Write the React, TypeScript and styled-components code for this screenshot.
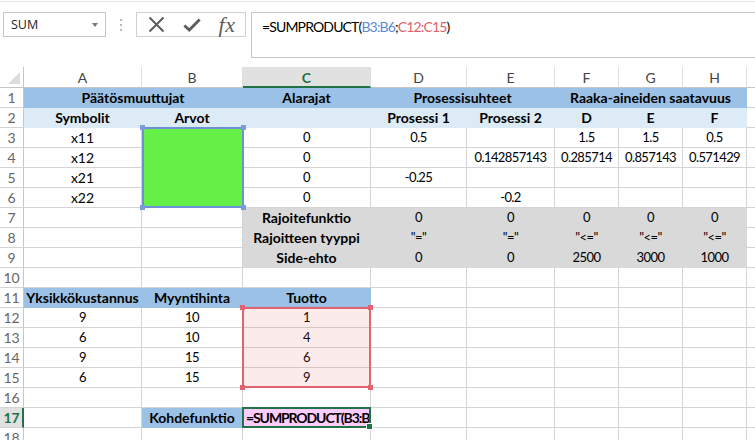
import React from 'react';
import styled, { createGlobalStyle } from 'styled-components';

const GRID = '#d4d4d4';
const BLUE = '#9bc2e6';
const LIGHTBLUE = '#ddebf7';
const GREEN = '#64f046';
const GRAY = '#d9d9d9';
const MAGENTA = '#ffccff';
const XL_GREEN = '#217346';

const COLS = [24, 118, 101, 128, 96, 88, 64, 64, 64, 64];
const HEAD_H = 21;
const ROW_H = 20;
const colLeft = (i: number) => COLS.slice(0, i).reduce((a, b) => a + b, 0);
const rowTop = (r: number) => HEAD_H + (r - 1) * ROW_H;

const Global = createGlobalStyle`
  html, body { margin: 0; padding: 0; background: #fff; }
  body { font-family: Lato, "Liberation Sans", sans-serif; }
`;

const Page = styled.div`
  width: 755px;
  height: 440px;
  overflow: hidden;
  background: #fff;
  display: flex;
  flex-direction: column;
`;

const TopStrip = styled.div`
  height: 1px;
  border-bottom: 1px solid #e3e3e3;
  flex: none;
`;

const FormulaRow = styled.div`
  display: flex;
  align-items: flex-start;
  padding: 10px 0 0 3px;
  height: 45px;
  flex: none;
`;

const NameBox = styled.div`
  box-sizing: border-box;
  width: 103px;
  height: 25px;
  border: 1px solid #c6c6c6;
  display: flex;
  align-items: center;
  justify-content: space-between;
  padding: 0 7px 0 7px;
  font-family: "Open Sans", "Noto Sans", sans-serif;
  font-size: 12.5px;
  color: #222;
`;

const DropArrow = styled.span`
  width: 0;
  height: 0;
  border-left: 3.5px solid transparent;
  border-right: 3.5px solid transparent;
  border-top: 4px solid #777;
`;

const Dots = styled.div`
  width: 30px;
  height: 25px;
  display: flex;
  flex-direction: column;
  align-items: center;
  justify-content: center;
  gap: 3px;
  & > span {
    width: 2px;
    height: 2px;
    background: #b9b9b9;
  }
`;

const ButtonBox = styled.div`
  box-sizing: border-box;
  width: 110px;
  height: 25px;
  border: 1px solid #d0d0d0;
  display: flex;
  align-items: center;
  padding-left: 10px;
`;

const IconSlot = styled.div<{ $w: number; $gap?: number }>`
  width: ${p => p.$w}px;
  margin-left: ${p => p.$gap ?? 0}px;
  display: flex;
  align-items: center;
  justify-content: center;
  color: #5c5c5c;
`;

const Fx = styled.span`
  font-family: "Liberation Serif", "DejaVu Serif", serif;
  font-style: italic;
  font-size: 22px;
  color: #5c5c5c;
  line-height: 1;
  letter-spacing: 0.5px;
`;

const FormulaBar = styled.div`
  box-sizing: border-box;
  margin-left: 5px;
  flex: 1;
  height: 46px;
  border: 1px solid #c6c6c6;
  border-right: none;
  padding: 4px 0 0 10px;
  font-size: 14px;
  letter-spacing: -0.85px;
  color: #000;
  line-height: 20px;
`;

const Ref = styled.span<{ $c: string }>`
  color: ${p => p.$c};
`;

const Sheet = styled.div`
  position: relative;
  margin-top: 10px;
  display: grid;
  grid-template-columns: ${COLS.map(c => c + 'px').join(' ')};
  grid-template-rows: ${HEAD_H}px repeat(19, ${ROW_H}px);
  width: ${colLeft(COLS.length)}px;
`;

const Corner = styled.div`
  position: relative;
  box-sizing: border-box;
  border-right: 1px solid #c6c6c6;
  border-bottom: 1px solid #c6c6c6;
  &::after {
    content: '';
    position: absolute;
    right: 3px;
    bottom: 3px;
    border-left: 12px solid transparent;
    border-bottom: 12px solid #dcdcdc;
  }
`;

const ColHead = styled.div<{ $active?: boolean }>`
  box-sizing: border-box;
  background: ${p => (p.$active ? '#e1e1e1' : '#fff')};
  color: ${p => (p.$active ? XL_GREEN : '#444')};
  font-weight: ${p => (p.$active ? 700 : 400)};
  border-right: 1px solid #dedede;
  border-bottom: ${p => (p.$active ? `2px solid ${XL_GREEN}` : '1px solid #c6c6c6')};
  display: flex;
  align-items: center;
  justify-content: center;
  font-size: 14px;
  padding-top: 1px;
`;

const RowHead = styled.div<{ $active?: boolean }>`
  box-sizing: border-box;
  background: ${p => (p.$active ? '#e1e1e1' : '#fff')};
  color: ${p => (p.$active ? XL_GREEN : '#666')};
  font-weight: ${p => (p.$active ? 700 : 400)};
  border-right: ${p => (p.$active ? `2px solid ${XL_GREEN}` : '1px solid #c6c6c6')};
  border-bottom: 1px solid ${GRID};
  font-size: 14px;
  line-height: 19px;
  text-align: center;
  padding-left: ${p => (p.$active ? 1 : 0)}px;
`;

const Cell = styled.div<{ $fill?: string; $bold?: boolean; $span?: number; $num?: boolean; $left?: boolean }>`
  box-sizing: border-box;
  grid-column: span ${p => p.$span ?? 1};
  background: ${p => p.$fill ?? '#fff'};
  border-right: 1px solid ${p => p.$fill ?? GRID};
  border-bottom: 1px solid ${p => p.$fill ?? GRID};
  font-size: ${p => (p.$num ? 13 : 14)}px;
  letter-spacing: ${p => (p.$num ? '-0.6px' : p.$left ? '-1.1px' : '0')};
  font-weight: ${p => (p.$bold ? 700 : 400)};
  line-height: 19px;
  text-align: ${p => (p.$left ? 'left' : 'center')};
  padding: ${p => (p.$left ? '0 0 0 3px' : '0 1px')};
  white-space: nowrap;
  overflow: hidden;
  color: #000;
`;

const RangeBox = styled.div<{ $c: string; $tint?: string }>`
  position: absolute;
  box-sizing: border-box;
  border: 2px solid ${p => p.$c};
  background: ${p => p.$tint ?? 'transparent'};
  pointer-events: none;
`;

const Handle = styled.span<{ $c: string; $x: 'l' | 'r'; $y: 't' | 'b' }>`
  position: absolute;
  width: 5px;
  height: 5px;
  background: ${p => p.$c};
  ${p => (p.$x === 'l' ? 'left: -4px;' : 'right: -4px;')}
  ${p => (p.$y === 't' ? 'top: -4px;' : 'bottom: -4px;')}
`;

const FillHandle = styled.span`
  position: absolute;
  width: 5px;
  height: 5px;
  right: -4px;
  bottom: -4px;
  background: ${XL_GREEN};
  border: 1px solid #fff;
`;

type C = { t?: string; b?: boolean; f?: string; s?: number; n?: boolean; l?: boolean };

const E: C = {};
const num = (t: string, f?: string): C => ({ t, n: true, f });
const emptyRow = (): C[] => Array.from({ length: 9 }, () => E);

const ROWS: C[][] = [
  [
    { t: 'Päätösmuuttujat', b: true, f: BLUE, s: 2 },
    { t: 'Alarajat', b: true, f: BLUE },
    { t: 'Prosessisuhteet', b: true, f: BLUE, s: 2 },
    { t: 'Raaka-aineiden saatavuus', b: true, f: BLUE, s: 3 },
    E,
  ],
  [
    { t: 'Symbolit', b: true, f: LIGHTBLUE },
    { t: 'Arvot', b: true, f: LIGHTBLUE },
    { f: LIGHTBLUE },
    { t: 'Prosessi 1', b: true, f: LIGHTBLUE },
    { t: 'Prosessi 2', b: true, f: LIGHTBLUE },
    { t: 'D', b: true, f: LIGHTBLUE },
    { t: 'E', b: true, f: LIGHTBLUE },
    { t: 'F', b: true, f: LIGHTBLUE },
    E,
  ],
  [{ t: 'x11' }, { f: GREEN }, num('0'), num('0.5'), E, num('1.5'), num('1.5'), num('0.5'), E],
  [{ t: 'x12' }, { f: GREEN }, num('0'), E, num('0.142857143'), num('0.285714'), num('0.857143'), num('0.571429'), E],
  [{ t: 'x21' }, { f: GREEN }, num('0'), num('-0.25'), E, E, E, E, E],
  [{ t: 'x22' }, { f: GREEN }, num('0'), E, num('-0.2'), E, E, E, E],
  [E, E, { t: 'Rajoitefunktio', b: true, f: GRAY }, num('0', GRAY), num('0', GRAY), num('0', GRAY), num('0', GRAY), num('0', GRAY), E],
  [E, E, { t: 'Rajoitteen tyyppi', b: true, f: GRAY }, num('"="', GRAY), num('"="', GRAY), num('"<="', GRAY), num('"<="', GRAY), num('"<="', GRAY), E],
  [E, E, { t: 'Side-ehto', b: true, f: GRAY }, num('0', GRAY), num('0', GRAY), num('2500', GRAY), num('3000', GRAY), num('1000', GRAY), E],
  emptyRow(),
  [
    { t: 'Yksikkökustannus', b: true, f: BLUE },
    { t: 'Myyntihinta', b: true, f: BLUE },
    { t: 'Tuotto', b: true, f: BLUE },
    E, E, E, E, E, E,
  ],
  [num('9'), num('10'), num('1'), E, E, E, E, E, E],
  [num('6'), num('10'), num('4'), E, E, E, E, E, E],
  [num('9'), num('15'), num('6'), E, E, E, E, E, E],
  [num('6'), num('15'), num('9'), E, E, E, E, E, E],
  emptyRow(),
  [E, { t: 'Kohdefunktio', b: true, f: BLUE }, { t: '=SUMPRODUCT(B3:B6;C12:C15)', b: true, f: MAGENTA, l: true }, E, E, E, E, E, E],
  emptyRow(),
  emptyRow(),
];

const LETTERS = ['A', 'B', 'C', 'D', 'E', 'F', 'G', 'H', 'I'];

const CrossIcon = () => (
  <svg width="17" height="17" viewBox="0 0 17 17">
    <path d="M1.5 1.5 L15.5 15.5 M15.5 1.5 L1.5 15.5" stroke="#5c5c5c" strokeWidth="2" fill="none" />
  </svg>
);

const CheckIcon = () => (
  <svg width="20" height="16" viewBox="0 0 20 16">
    <path d="M1.5 8.5 L7 13.5 L18.5 2" stroke="#5c5c5c" strokeWidth="3.2" fill="none" />
  </svg>
);

const Handles: React.FC<{ c: string }> = ({ c }) => (
  <>
    <Handle $c={c} $x="l" $y="t" />
    <Handle $c={c} $x="r" $y="t" />
    <Handle $c={c} $x="l" $y="b" />
    <Handle $c={c} $x="r" $y="b" />
  </>
);

export default function App() {
  return (
    <Page>
      <Global />
      <TopStrip />
      <FormulaRow>
        <NameBox>
          SUM
          <DropArrow />
        </NameBox>
        <Dots>
          <span />
          <span />
          <span />
        </Dots>
        <ButtonBox>
          <IconSlot $w={18}>
            <CrossIcon />
          </IconSlot>
          <IconSlot $w={18} $gap={18}>
            <CheckIcon />
          </IconSlot>
          <IconSlot $w={20} $gap={16}>
            <Fx>fx</Fx>
          </IconSlot>
        </ButtonBox>
        <FormulaBar>
          =SUMPRODUCT(<Ref $c="#5b8ad6">B3:B6</Ref>;<Ref $c="#e0606c">C12:C15</Ref>)
        </FormulaBar>
      </FormulaRow>
      <Sheet>
        <Corner />
        {LETTERS.map(l => (
          <ColHead key={l} $active={l === 'C'}>
            {l}
          </ColHead>
        ))}
        {ROWS.map((row, ri) => (
          <React.Fragment key={ri}>
            <RowHead $active={ri + 1 === 17}>{ri + 1}</RowHead>
            {row.map((c, ci) => (
              <Cell key={ci} $fill={c.f} $bold={c.b} $span={c.s} $num={c.n} $left={c.l}>
                {c.t}
              </Cell>
            ))}
          </React.Fragment>
        ))}
        <RangeBox
          $c="#6f8fd8"
          style={{ left: colLeft(2), top: rowTop(3) - 1, width: COLS[2] + 1, height: 4 * ROW_H + 1 }}
        >
          <Handles c="#7d9bdc" />
        </RangeBox>
        <RangeBox
          $c="#e0636f"
          $tint="rgba(232, 90, 90, 0.12)"
          style={{ left: colLeft(3) - 1, top: rowTop(12) - 1, width: COLS[3] + 1, height: 4 * ROW_H + 1 }}
        >
          <Handles c="#e0636f" />
        </RangeBox>
        <RangeBox
          $c={XL_GREEN}
          style={{ left: colLeft(3) - 1, top: rowTop(17) - 1, width: COLS[3] + 1, height: ROW_H + 1 }}
        >
          <FillHandle />
        </RangeBox>
      </Sheet>
    </Page>
  );
}
